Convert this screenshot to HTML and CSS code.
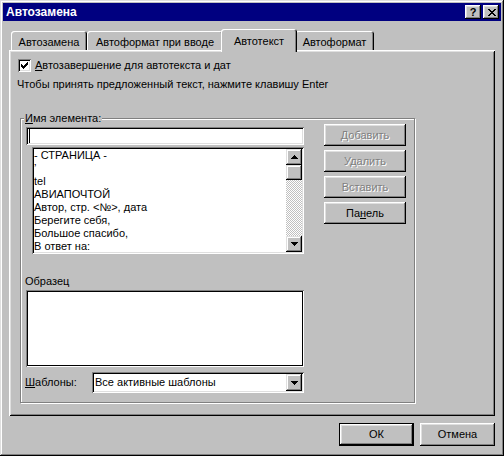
FILE: index.html
```html
<!DOCTYPE html>
<html lang="ru">
<head>
<meta charset="utf-8">
<title>Автозамена</title>
<link rel="stylesheet" href="styles.css">
</head>
<body>
<div class="window">
  <div class="titlebar">
    <span class="title">Автозамена</span>
    <div class="caption-btns">
      <span class="cbtn help">?</span>
      <span class="cbtn close"><svg width="8" height="7" viewBox="0 0 8 7" shape-rendering="crispEdges"><path d="M0 0h2v1h-2zM6 0h2v1h-2zM1 1h2v1h-2zM5 1h2v1h-2zM2 2h4v1h-4zM3 3h2v1h-2zM2 4h4v1h-4zM1 5h2v1h-2zM5 5h2v1h-2zM0 6h2v1h-2zM6 6h2v1h-2z" fill="#000"/></svg></span>
    </div>
  </div>

  <div class="tabs">
    <div class="tab t1">Автозамена</div>
    <div class="tab t2">Автоформат при вводе</div>
    <div class="tab t3 active">Автотекст</div>
    <div class="tab t4">Автоформат</div>
  </div>

  <div class="panel">
    <div class="check-row">
      <span class="checkbox"><svg width="7" height="7" viewBox="0 0 7 7" shape-rendering="crispEdges"><path d="M6 0h1v3h-1zM5 1h1v3h-1zM4 2h1v3h-1zM0 2h1v3h-1zM1 3h1v3h-1zM2 4h1v3h-1zM3 3h1v3h-1z" fill="#000"/></svg></span>
      <span class="check-label"><u>А</u>втозавершение для автотекста и дат</span>
    </div>
    <div class="hint">Чтобы принять предложенный текст, нажмите клавишу Enter</div>

    <div class="group">
      <span class="legend"><u>И</u>мя элемента:</span>
      <div class="top">
        <div class="leftcol">
          <div class="field name"><span class="caret"></span></div>
          <div class="list">
            <div class="items">
              <div class="item">- СТРАНИЦА -</div>
              <div class="item">’</div>
              <div class="item">tel</div>
              <div class="item">АВИАПОЧТОЙ</div>
              <div class="item">Автор, стр. &lt;№&gt;, дата</div>
              <div class="item">Берегите себя,</div>
              <div class="item">Большое спасибо,</div>
              <div class="item">В ответ на:</div>
            </div>
            <div class="vscroll">
              <span class="sbtn"><svg width="7" height="4" viewBox="0 0 7 4" shape-rendering="crispEdges"><path d="M3 0h1v1h-1zM2 1h3v1h-3zM1 2h5v1h-5zM0 3h7v1h-7z" fill="#000"/></svg></span>
              <span class="thumb"></span>
              <span class="track"></span>
              <span class="sbtn"><svg width="7" height="4" viewBox="0 0 7 4" shape-rendering="crispEdges"><path d="M0 0h7v1h-7zM1 1h5v1h-5zM2 2h3v1h-3zM3 3h1v1h-1z" fill="#000"/></svg></span>
            </div>
          </div>
        </div>
        <div class="btncol">
          <div class="btn wide disabled">Добавить</div>
          <div class="btn wide disabled">Удалить</div>
          <div class="btn wide disabled">Вставить</div>
          <div class="btn wide">Па<u>н</u>ель</div>
        </div>
      </div>

      <div class="sample-label">Образец</div>
      <div class="sample"></div>

      <div class="combo-row">
        <span class="combo-label"><u>Ш</u>аблоны:</span>
        <div class="combo">
          <span class="combo-text">Все активные шаблоны</span>
          <span class="dropbtn"><svg width="7" height="4" viewBox="0 0 7 4" shape-rendering="crispEdges"><path d="M0 0h7v1h-7zM1 1h5v1h-5zM2 2h3v1h-3zM3 3h1v1h-1z" fill="#000"/></svg></span>
        </div>
      </div>
    </div>
  </div>

  <div class="footer">
    <div class="btn default">ОК</div>
    <div class="btn">Отмена</div>
  </div>
</div>
</body>
</html>
```

FILE: styles.css
```css
* { box-sizing: border-box; }

body {
  margin: 0;
  background: #c0c0c0;
  font-family: "Liberation Sans", Arial, sans-serif;
  font-size: 11px;
  line-height: 13px;
  color: #000;
}

u { text-decoration: underline; text-underline-offset: 1px; }

.window {
  width: 504px;
  height: 456px;
  padding: 3px;
  background: #c0c0c0;
  display: flex;
  flex-direction: column;
  box-shadow: inset -1px -1px #000, inset 1px 1px #dfdfdf,
              inset -2px -2px #808080, inset 2px 2px #fff;
}

/* title bar */
.titlebar {
  height: 18px;
  flex: none;
  background: #000080;
  color: #fff;
  display: flex;
  justify-content: space-between;
  align-items: flex-start;
  padding: 0 2px 0 3px;
}
.title {
  font-weight: bold;
  font-size: 12px;
  line-height: 18px;
}
.caption-btns {
  display: flex;
  gap: 2px;
  margin-top: 2px;
}
.cbtn {
  width: 16px;
  height: 14px;
  background: #c0c0c0;
  color: #000;
  display: flex;
  align-items: center;
  justify-content: center;
  font-weight: bold;
  font-size: 11px;
  line-height: 14px;
  box-shadow: inset -1px -1px #000, inset 1px 1px #fff,
              inset -2px -2px #808080, inset 2px 2px #dfdfdf;
}
.cbtn.close svg { margin-left: 1px; }

/* tabs */
.tabs {
  flex: none;
  height: 21px;
  margin-top: 8px;
  padding-left: 8px;
  display: flex;
  align-items: flex-end;
  position: relative;
  z-index: 1;
}
.tab {
  height: 19px;
  padding-top: 5px;
  text-align: center;
  white-space: nowrap;
  background: #c0c0c0;
  border-radius: 3px 3px 0 0;
  box-shadow: inset 1px 1px #fff, inset -1px 0 #000, inset -2px 0 #808080;
}
.t1 { width: 76px; }
.t2 { width: 136px; }
.t3 { width: 76px; }
.t4 { width: 79px; }
.tab.active {
  height: 23px;
  padding-top: 6px;
  margin: 0 -2px -2px;
  position: relative;
  z-index: 2;
}

/* panel */
.panel {
  flex: none;
  width: 486px;
  height: 366px;
  margin-left: 6px;
  padding-top: 9px;
  box-shadow: inset 1px 1px #fff, inset -1px -1px #000,
              inset 2px 2px #dfdfdf, inset -2px -2px #808080;
}
.check-row {
  display: flex;
  align-items: center;
  height: 13px;
  margin-left: 9px;
  gap: 4px;
}
.checkbox {
  width: 13px;
  height: 13px;
  background: #fff;
  display: flex;
  align-items: center;
  justify-content: center;
  box-shadow: inset 1px 1px #808080, inset -1px -1px #fff,
              inset 2px 2px #000, inset -2px -2px #dfdfdf;
}
.check-label { line-height: 13px; }
.hint {
  margin: 6px 0 0 8px;
  height: 13px;
}

/* group box */
.group {
  position: relative;
  width: 395px;
  height: 285px;
  margin: 27px 0 0 11px;
  border: 1px solid #808080;
  box-shadow: 1px 1px 0 #fff, inset 1px 1px 0 #fff;
}
.legend {
  position: absolute;
  top: -7px;
  left: 3px;
  padding: 0 1px;
  background: #c0c0c0;
  line-height: 13px;
}
.top {
  display: flex;
  align-items: flex-start;
}
.leftcol {
  width: 278px;
  margin: 8px 0 0 5px;
}
.field {
  background: #fff;
  box-shadow: inset 1px 1px #808080, inset -1px -1px #fff,
              inset 2px 2px #000, inset -2px -2px #dfdfdf;
}
.name {
  height: 18px;
  padding: 2px 0 0 3px;
}
.caret {
  display: block;
  width: 1px;
  height: 14px;
  background: #000;
}
.list {
  width: 272px;
  height: 107px;
  margin: 2px 0 0 6px;
  padding: 2px;
  display: flex;
  background: #fff;
  box-shadow: inset 1px 1px #808080, inset -1px -1px #fff,
              inset 2px 2px #000, inset -2px -2px #dfdfdf;
}
.items {
  flex: 1;
  overflow: hidden;
}
.item {
  height: 13px;
  line-height: 13px;
  white-space: nowrap;
}
.vscroll {
  width: 16px;
  display: flex;
  flex-direction: column;
}
.sbtn, .thumb, .dropbtn {
  flex: none;
  width: 16px;
  height: 16px;
  background: #c0c0c0;
  display: flex;
  align-items: center;
  justify-content: center;
  box-shadow: inset -1px -1px #000, inset 1px 1px #dfdfdf,
              inset -2px -2px #808080, inset 2px 2px #fff;
}
.thumb { height: 15px; }
.track {
  flex: 1;
  background: repeating-conic-gradient(#fff 0 25%, #c0c0c0 0 50%) 0 0 / 2px 2px;
}

.btncol {
  display: flex;
  flex-direction: column;
  gap: 4px;
  margin: 5px 0 0 20px;
}

/* buttons */
.btn {
  width: 75px;
  height: 23px;
  display: flex;
  align-items: center;
  justify-content: center;
  background: #c0c0c0;
  box-shadow: inset -1px -1px #000, inset 1px 1px #fff,
              inset -2px -2px #808080, inset 2px 2px #dfdfdf;
}
.btn.wide {
  width: 82px;
  height: 22px;
}
.btn.disabled {
  color: #808080;
  text-shadow: 1px 1px 0 #fff;
}
.btn.default {
  border: 1px solid #000;
}

.sample-label {
  margin: 21px 0 0 4px;
  height: 13px;
}
.sample {
  width: 278px;
  height: 77px;
  margin: 2px 0 0 5px;
  background: #fff;
  box-shadow: inset 1px 1px #808080, inset -1px -1px #fff,
              inset 0 0 0 2px #000;
}
.combo-row {
  display: flex;
  align-items: center;
  height: 21px;
  margin: 5px 0 0 4px;
}
.combo-label { width: 67px; }
.combo {
  width: 212px;
  height: 21px;
  padding: 2px;
  display: flex;
  align-items: center;
  background: #fff;
  box-shadow: inset 1px 1px #808080, inset -1px -1px #fff,
              inset 2px 2px #000, inset -2px -2px #dfdfdf;
}
.combo-text {
  flex: 1;
  padding-left: 1px;
}
.dropbtn { height: 17px; }

/* footer */
.footer {
  flex: none;
  display: flex;
  justify-content: flex-end;
  gap: 6px;
  margin-top: 7px;
  padding-right: 6px;
}
```
